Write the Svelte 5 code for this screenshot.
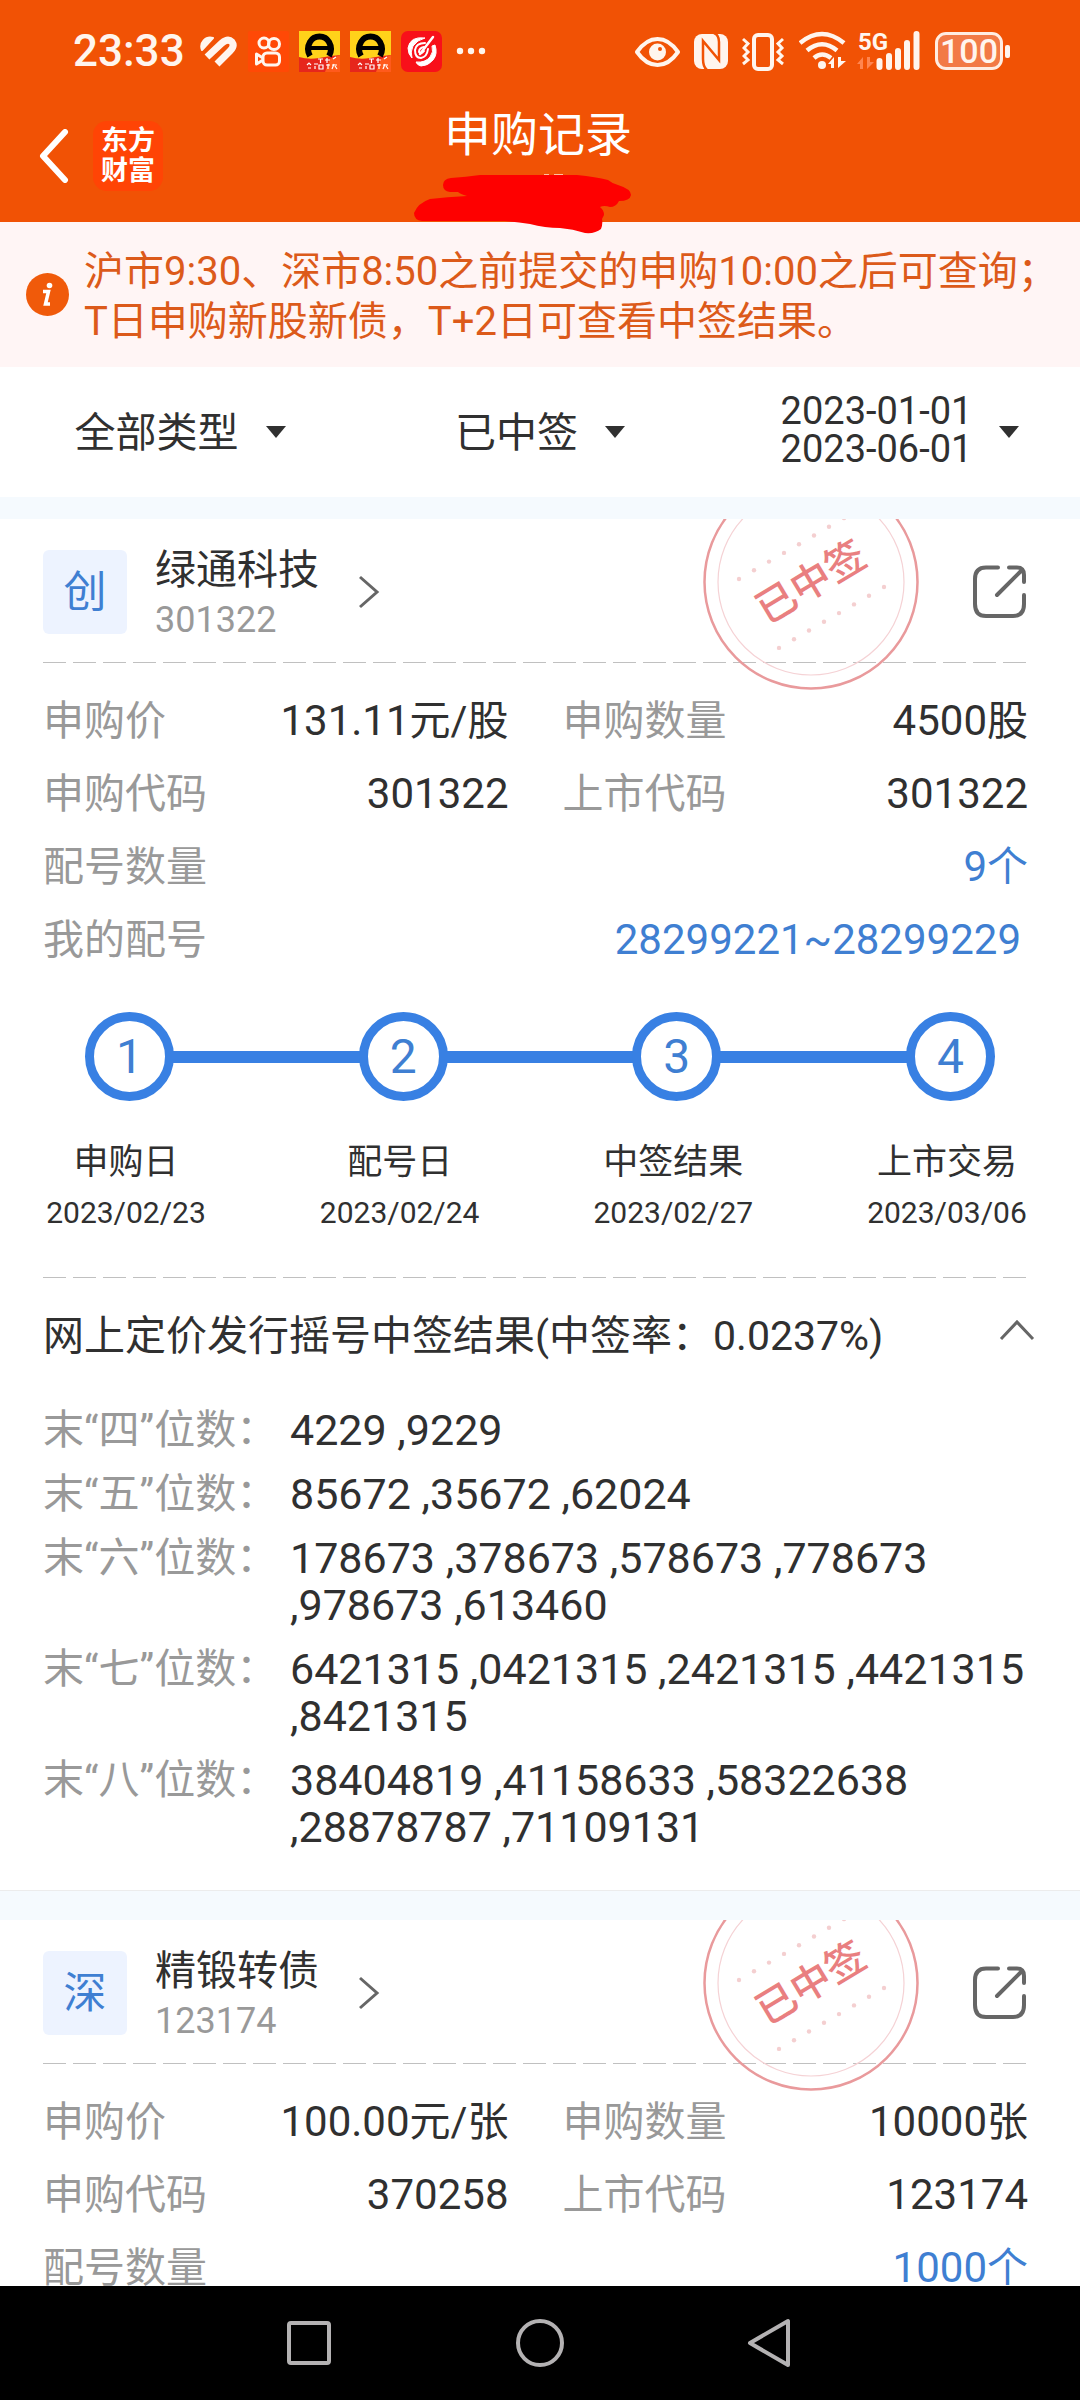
<script>
  const records = [
    {
      badge: '创',
      name: '绿通科技',
      code: '301322',
      price: '131.11',
      priceUnit: '元/股',
      amount: '4500',
      amountUnit: '股',
      applyCode: '301322',
      listCode: '301322',
      count: '9',
      numbers: '28299221~28299229',
      steps: [
        { label: '申购日', date: '2023/02/23' },
        { label: '配号日', date: '2023/02/24' },
        { label: '中签结果', date: '2023/02/27' },
        { label: '上市交易', date: '2023/03/06' }
      ],
      rate: '0.0237%',
      results: [
        { digit: '四', list: '4229 ,9229' },
        { digit: '五', list: '85672 ,35672 ,62024' },
        { digit: '六', list: '178673 ,378673 ,578673 ,778673 ,978673 ,613460' },
        { digit: '七', list: '6421315 ,0421315 ,2421315 ,4421315 ,8421315' },
        { digit: '八', list: '38404819 ,41158633 ,58322638 ,28878787 ,71109131' }
      ]
    },
    {
      badge: '深',
      name: '精锻转债',
      code: '123174',
      price: '100.00',
      priceUnit: '元/张',
      amount: '10000',
      amountUnit: '张',
      applyCode: '370258',
      listCode: '123174',
      count: '1000'
    }
  ];
  const dots = [0, 1, 2, 3, 4, 5, 6, 7];
  let open = $state(true);
</script>

<div class="screen">
  <header>
    <div class="status">
      <div class="status-left">
        <span class="time">23:33</span>
        <svg class="heart" width="38" height="32" viewBox="199 35 38 32" aria-hidden="true">
          <path d="M202 50A9 9 0 0 1 213 38Z" fill="#fff5ee" stroke="#fff5ee" stroke-width="2" stroke-linejoin="round" />
          <path d="M207 57L222 43Q228 38 232 42Q235 46 230 51L217 64" fill="none" stroke="#fff5ee" stroke-width="7" />
        </svg>
        <svg width="41" height="41" viewBox="249 31 41 41" aria-hidden="true">
          <rect x="249" y="31" width="41" height="41" rx="2" fill="#ff4906" />
          <g fill="none" stroke="#fff5ee" stroke-width="3">
            <circle cx="265" cy="43" r="5" />
            <circle cx="275" cy="44" r="5.5" />
            <rect x="264" y="53" width="16.500" height="12" rx="4" />
            <path d="M264 58L257.500 54V64L264 60" stroke-linejoin="round" />
          </g>
        </svg>
        {#each [1, 2] as n (n)}
          <svg width="41" height="41" viewBox="0 0 41 41" aria-hidden="true">
            <rect width="41" height="41" fill="#ffd21a" />
            <path d="M0 26Q10 29 20 27T41 24V41H0Z" fill="#e6261c" />
            <path d="M31 28L41 24V41H26Z" fill="#ff5a1c" />
            <path d="M11 25Q7 18 11 11Q14 5.500 20.500 5.500T30 11Q34 18 30 25" fill="none" stroke="#000" stroke-width="6" />
            <path d="M11 17H30" stroke="#000" stroke-width="4" />
            <path d="M19 28H24M21.500 28V32M26 29H31M28 27V32M34 28L37 26M8 34L10 32L12 34M9 37H12M15 33H19M16 35V38M20 34V38H24V34ZM27 34H31M29 33V38M33 34H38M35 33L33 38M36 35L38 38" stroke="#fff" stroke-width="1.200" fill="none" />
          </svg>
        {/each}
        <svg width="41" height="41" viewBox="0 0 41 41" aria-hidden="true">
          <rect width="41" height="41" rx="7" fill="#f8101a" />
          <path d="M24 7Q9 5 7 17Q7 23 11 27Q9 21 12 15Q16 9 24 7Z" fill="#fff" stroke="#fff" stroke-linejoin="round" />
          <path d="M15 31Q24 32 29 26Q33 21 31 15L34 14Q37 23 32 29Q27 35 20 35Q16 34 15 31Z" fill="#fff" stroke="#fff" stroke-linejoin="round" />
          <path d="M24 12Q15 12 14 19Q14 27 20 27Q26 26 27 18M23 16Q18 17 18 21Q20 24 23 20" fill="none" stroke="#fff" stroke-width="2" stroke-linecap="round" />
          <path d="M32 6L19 23" fill="none" stroke="#fff" stroke-width="2.500" stroke-linecap="round" />
        </svg>
        <svg class="more" width="30" height="8" viewBox="0 0 30 8" aria-hidden="true">
          <g fill="#fff5ee"><circle cx="4" cy="4" r="3.200" /><circle cx="15" cy="4" r="3.200" /><circle cx="26" cy="4" r="3.200" /></g>
        </svg>
      </div>
      <div class="status-right">
        <svg width="45" height="41" viewBox="634 31 45 41" aria-hidden="true">
          <path d="M636 52Q645 39 656.500 39T677 52Q668 65 656.500 65T636 52Z" fill="none" stroke="#fff5ee" stroke-width="4" stroke-linejoin="round" />
          <circle cx="656.500" cy="52" r="8.500" fill="#fff5ee" />
          <circle cx="659" cy="49" r="2" fill="#f15205" />
        </svg>
        <svg width="34" height="41" viewBox="693 31 34 41" aria-hidden="true">
          <rect x="693" y="34" width="34" height="35" rx="8" fill="#fff5ee" />
          <path d="M702 59V41L718 60V42Q718 35 713 33M702 59Q702 67 706 70" fill="none" stroke="#f15205" stroke-width="2.500" />
        </svg>
        <svg width="43" height="41" viewBox="742 31 43 41" aria-hidden="true">
          <g fill="none" stroke="#fff5ee">
            <rect x="754" y="35" width="18" height="34" rx="4" stroke-width="4" />
            <path d="M743 39L748 43.500L744 48L748 52L744 56L748 60L743 64M783 39L778 43.500L782 48L778 52L782 56L778 60L783 64" stroke-width="3" />
          </g>
        </svg>
        <svg width="48" height="41" viewBox="799 31 48 41" aria-hidden="true">
          <g fill="none" stroke="#fff5ee" stroke-width="4.500">
            <path d="M800 43Q822 25 844 43M807 50.500Q822 38 837 50.500M814 58Q822 51 831 58" />
          </g>
          <circle cx="822" cy="65" r="4" fill="#fff5ee" />
          <path d="M828 64L834 57V68H831V64ZM838 57V68L846 61H841V57Z" fill="#fff5ee" />
        </svg>
        <svg class="signal" width="64" height="48" viewBox="856 27 64 48" aria-hidden="true">
          <text x="857" y="50" class="net">5G</text>
          <path d="M856 64L862 57V69H859V64ZM866 57V69L873 62H869V57Z" fill="#ff8550" />
          <path d="M878.500 61V67M888 56V67M897 51V67M906 43V67M915.500 34V67" stroke="#fff5ee" stroke-width="6" stroke-linecap="round" />
        </svg>
        <span class="battery"><span class="cell">100</span><span class="tip"></span></span>
      </div>
    </div>
    <nav class="bar">
      <div class="left">
        <button class="plain" aria-label="返回">
          <svg width="30" height="54" viewBox="0 0 30 54"><path d="M26 3L4 27L26 51" fill="none" stroke="#fff" stroke-width="6" stroke-linecap="round" stroke-linejoin="round" /></svg>
        </button>
        <a class="logo" href="#home">东方<br />财富</a>
      </div>
      <h1>申购记录</h1>
      <span></span>
    </nav>
    <svg class="scribble" width="220" height="62" viewBox="412 173 220 62" aria-hidden="true">
      <path d="M544 174.500H549M554 174.500H563" stroke="#ffc2a0" stroke-width="1" />
      <path d="M443 185Q443 179 451 178Q466 177 480 175H577Q596 177 608 180Q613 184 618 185Q631 189 631 195Q630 201 619 201Q616 207 610 207Q604 205 600 207Q604 210 604 215L602 219Q603 224 601 229Q595 234 585 233Q573 229 560 228Q545 228 530 224Q518 222 505 221H422Q414 220 414 213Q418 203 430 199Q447 197 467 196Q460 194 458 192H450Q443 191 443 185Z" fill="#fe0000" />
    </svg>
  </header>

  <div class="notice">
    <svg width="43" height="43" viewBox="0 0 43 43" aria-hidden="true">
      <circle cx="21.500" cy="21.500" r="21.500" fill="#f05a0a" />
      <circle cx="23.500" cy="12.500" r="2.800" fill="#fff" />
      <path d="M17 18.500H22.500L19.500 31H24" fill="none" stroke="#fff" stroke-width="3.500" />
    </svg>
    <p>沪市9:30、深市8:50之前提交的申购10:00之后可查询；<br />T日申购新股新债，T+2日可查看中签结果。</p>
  </div>

  <div class="filters">
    <label class="filter">
      <select aria-label="类型"><option>全部类型</option></select>
      <span class="caret"></span>
    </label>
    <label class="filter">
      <select aria-label="状态"><option>已中签</option></select>
      <span class="caret"></span>
    </label>
    <button class="filter plain dates">
      <span class="range">2023-01-01<br />2023-06-01</span>
      <span class="caret"></span>
    </button>
  </div>

  <main>
    {#each records as r (r.name)}
      <article>
        <svg class="stamp" width="220" height="220" viewBox="0 0 220 220" aria-hidden="true">
          <circle cx="110" cy="110" r="106.500" fill="none" stroke="#e99a9c" stroke-width="2.500" />
          <circle cx="110" cy="110" r="93" fill="none" stroke="#f5d2d5" stroke-width="1.200" />
          {#each dots as d (d)}
            <circle cx={38 + d * 15} cy={107 - d * 8.7} r="2.200" fill="#f4cfd0" />
            <circle cx={183 - d * 15} cy={115 + d * 8.7} r="2.200" fill="#f4cfd0" />
          {/each}
          <text class="stamp-text" x="110" y="124" transform="rotate(-31 110 110)">已中签</text>
        </svg>
        <div class="head">
          <span class="badge">{r.badge}</span>
          <div class="title">
            <h2>{r.name}</h2>
            <span class="code">{r.code}</span>
          </div>
          <button class="plain go" aria-label="查看详情">
            <svg width="22" height="34" viewBox="0 0 22 34"><path d="M2 2L19 17L2 32" fill="none" stroke="#666" stroke-width="3" /></svg>
          </button>
          <button class="plain share" aria-label="分享">
            <svg width="56" height="56" viewBox="972 564 56 56"><path d="M998 567.500H986Q975 567.500 975 579V604Q975 616 986 616H1013Q1024 616 1024 604V595M1009 567.500H1017Q1024 567.500 1024 575V582M997 595L1022 570" fill="none" stroke="#666" stroke-width="4" stroke-linecap="round" /></svg>
          </button>
        </div>
        <div class="rule"></div>
        <dl class="facts">
          <div><dt>申购价</dt><dd><b>{r.price}</b>{r.priceUnit}</dd></div>
          <div><dt>申购数量</dt><dd><b>{r.amount}</b>{r.amountUnit}</dd></div>
          <div><dt>申购代码</dt><dd><b>{r.applyCode}</b></dd></div>
          <div><dt>上市代码</dt><dd><b>{r.listCode}</b></dd></div>
          <div class="wide"><dt>配号数量</dt><dd><a href="#numbers"><b>{r.count}</b>个</a></dd></div>
          {#if r.numbers}
            <div class="wide"><dt>我的配号</dt><dd class="inset"><a href="#numbers"><b>{r.numbers}</b></a></dd></div>
          {/if}
        </dl>
        {#if r.steps}
          <div class="track">
            {#each r.steps as s, i (s.label)}
              {#if i > 0}<span class="line"></span>{/if}
              <span class="dot">{i + 1}</span>
            {/each}
          </div>
          <ol class="steps">
            {#each r.steps as s (s.label)}
              <li><span>{s.label}</span><time>{s.date}</time></li>
            {/each}
          </ol>
          <div class="rule"></div>
          <button class="plain summary" aria-expanded={open} onclick={() => (open = !open)}>
            <span>网上定价发行摇号中签结果(中签率：{r.rate})</span>
            <svg width="36" height="34" viewBox="0 0 36 34" aria-hidden="true"><path d="M2 20L18 3L34 20" fill="none" stroke="#666" stroke-width="3" /></svg>
          </button>
          {#if open}
            <dl class="results">
              {#each r.results as x (x.digit)}
                <dt>末“{x.digit}”位数：</dt>
                <dd>{x.list}</dd>
              {/each}
            </dl>
          {/if}
        {/if}
      </article>
    {/each}
  </main>

  <footer>
    <button class="plain" aria-label="最近任务">
      <svg width="50" height="50" viewBox="0 0 50 50"><rect x="4" y="5" width="40" height="40" rx="2" fill="none" stroke="#b4b2b3" stroke-width="4" /></svg>
    </button>
    <button class="plain" aria-label="主页">
      <svg width="50" height="50" viewBox="0 0 50 50"><circle cx="25" cy="25" r="22" fill="none" stroke="#b4b2b3" stroke-width="4" /></svg>
    </button>
    <button class="plain" aria-label="后退">
      <svg width="50" height="50" viewBox="0 0 50 50"><path d="M43 3V47L5 25Z" fill="none" stroke="#b4b2b3" stroke-width="4" stroke-linejoin="round" /></svg>
    </button>
  </footer>
</div>

<style>
  :global(body) {
    margin: 0;
    background: #fff;
  }
  .screen {
    display: flex;
    flex-direction: column;
    height: 100vh;
    font-family: Roboto, 'Noto Sans CJK SC', sans-serif;
    font-size: 41px;
    color: #303030;
  }
  h1, h2, p, dl, dd, ol {
    margin: 0;
    padding: 0;
    font-weight: 400;
  }
  svg {
    display: block;
    flex: none;
  }
  .plain {
    padding: 0;
    border: 0;
    background: none;
    font: inherit;
    color: inherit;
    text-align: left;
  }
  b {
    font-size: 42px;
    font-weight: 400;
  }

  header {
    position: relative;
    flex: none;
    background: #f15205;
    color: #fff;
  }
  .status {
    display: flex;
    justify-content: space-between;
    height: 102px;
    padding: 0 70px 0 73px;
  }
  .status-left,
  .status-right {
    display: flex;
    align-items: center;
    color: #fff5ee;
  }
  .status-left {
    gap: 10px;
  }
  .status-right {
    gap: 14px;
  }
  .signal {
    margin-left: -4px;
  }
  .time {
    font-size: 44px;
    font-weight: 500;
    line-height: 44px;
  }
  .heart {
    margin: 0 1px 0 4px;
  }
  .more {
    margin-left: 4px;
  }
  .net {
    font: 700 24px Roboto, sans-serif;
    fill: #fff5ee;
  }
  .battery {
    display: flex;
    align-items: center;
    gap: 2px;
  }
  .cell {
    display: flex;
    align-items: center;
    justify-content: center;
    box-sizing: border-box;
    width: 68px;
    height: 38px;
    border: 3px solid #ffede2;
    border-radius: 11px;
    background: #f27a46;
    font-size: 34px;
    font-weight: 500;
    line-height: 32px;
  }
  .tip {
    width: 5px;
    height: 13px;
    border-radius: 2px;
    background: #fff5ee;
  }
  .bar {
    display: grid;
    grid-template-columns: 1fr auto 1fr;
    height: 120px;
    padding-right: 4px;
  }
  .left {
    display: flex;
    align-items: center;
    height: 70px;
    gap: 24px;
    padding: 19px 0 0 39px;
  }
  .logo {
    width: 70px;
    height: 60px;
    padding: 5px 0;
    border-radius: 14px;
    background: #ff4405;
    color: #fff;
    font-size: 27px;
    font-weight: 700;
    line-height: 30px;
    text-align: center;
    text-decoration: none;
  }
  h1 {
    font-size: 47px;
    line-height: 66px;
  }
  .scribble {
    position: absolute;
    left: 50%;
    bottom: -13px;
    margin-left: -128px;
    z-index: 1;
  }

  .notice {
    display: flex;
    align-items: center;
    flex: none;
    gap: 15px;
    padding: 25px 0 20px 26px;
    background: #fff5f5;
    color: #dc5a1a;
    font-size: 40px;
    line-height: 50px;
  }
  .notice svg {
    margin-bottom: 5px;
  }

  .filters {
    display: grid;
    grid-template-columns: repeat(3, 1fr);
    flex: none;
    height: 130px;
  }
  .filter {
    display: flex;
    align-items: center;
    justify-content: center;
    gap: 27px;
  }
  select {
    appearance: none;
    margin: 0;
    padding: 2px 0 0;
    border: 0;
    background: none;
    font: inherit;
    color: inherit;
    line-height: 60px;
  }
  .caret {
    border: 10px solid transparent;
    border-top: 12px solid #303030;
    border-bottom: 0;
  }
  .dates {
    font-size: 38px;
    line-height: 38px;
  }
  .range {
    padding-bottom: 5px;
  }

  main {
    flex: 1;
    min-height: 0;
    overflow: auto;
    scrollbar-width: none;
  }
  article {
    position: relative;
    overflow: hidden;
    border-top: 22px solid #f5fafe;
    border-bottom: 1px solid #ececec;
  }
  article + article {
    border-top-width: 29px;
  }
  .stamp {
    position: absolute;
    top: -47px;
    right: 159px;
  }
  .stamp-text {
    font: 500 40px 'Noto Sans CJK SC', sans-serif;
    fill: #e97f80;
    text-anchor: middle;
  }
  .head {
    display: flex;
    align-items: center;
    height: 84px;
    padding: 31px 52px 28px 43px;
  }
  .badge {
    width: 84px;
    margin-right: 28px;
    border-radius: 6px;
    background: #edf3ff;
    color: #3f7fd2;
    font-size: 43px;
    line-height: 84px;
    text-align: center;
  }
  .title {
    display: flex;
    flex-direction: column;
    padding-top: 4px;
  }
  h2 {
    font-size: 41px;
    line-height: 52px;
  }
  .code {
    color: #999;
    font-size: 36px;
    line-height: 48px;
  }
  .go {
    margin-left: 39px;
  }
  .share {
    margin-left: auto;
  }
  .rule {
    height: 1px;
    margin: 0 51px 0 43px;
    background: repeating-linear-gradient(90deg, #c0c0c0 0 23px, transparent 23px 30px);
  }
  .facts {
    display: grid;
    grid-template-columns: 1fr 1fr;
    gap: 1px 54px;
    padding: 22px 52px 0 43px;
    line-height: 72px;
  }
  .facts div {
    display: flex;
    justify-content: space-between;
  }
  .facts .wide {
    grid-column: 1 / -1;
  }
  dt {
    color: #999;
  }
  .facts a {
    color: #3f7fd2;
    text-decoration: none;
  }
  .inset {
    padding-right: 7px;
  }

  .track {
    display: flex;
    align-items: center;
    padding: 36px 85px 0;
  }
  .dot {
    box-sizing: border-box;
    width: 89px;
    height: 89px;
    border: 9px solid #3880e3;
    border-radius: 50%;
    color: #3f7fd2;
    font-size: 48px;
    line-height: 72px;
    text-align: center;
  }
  .line {
    flex: 1;
    height: 12px;
    margin: 0 -2px;
    background: #3880e3;
  }
  .steps {
    display: flex;
    justify-content: space-between;
    padding: 37px 53px 39px 46px;
    list-style: none;
  }
  .steps li {
    display: flex;
    flex-direction: column;
    width: 160px;
    text-align: center;
    font-size: 35px;
    line-height: 50px;
  }
  time {
    font-size: 30px;
  }
  .summary {
    display: flex;
    align-items: center;
    justify-content: space-between;
    width: 100%;
    padding: 28px 45px 28px 43px;
    line-height: 60px;
  }
  .results {
    display: grid;
    grid-template-columns: 247px 1fr;
    row-gap: 17px;
    padding: 13px 43px 39px;
    line-height: 47px;
  }
  .results dt {
    white-space: nowrap;
  }
  .results dd {
    font-size: 43px;
  }

  footer {
    display: flex;
    align-items: center;
    justify-content: center;
    flex: none;
    gap: 180px;
    height: 114px;
    background: #000;
  }
</style>
